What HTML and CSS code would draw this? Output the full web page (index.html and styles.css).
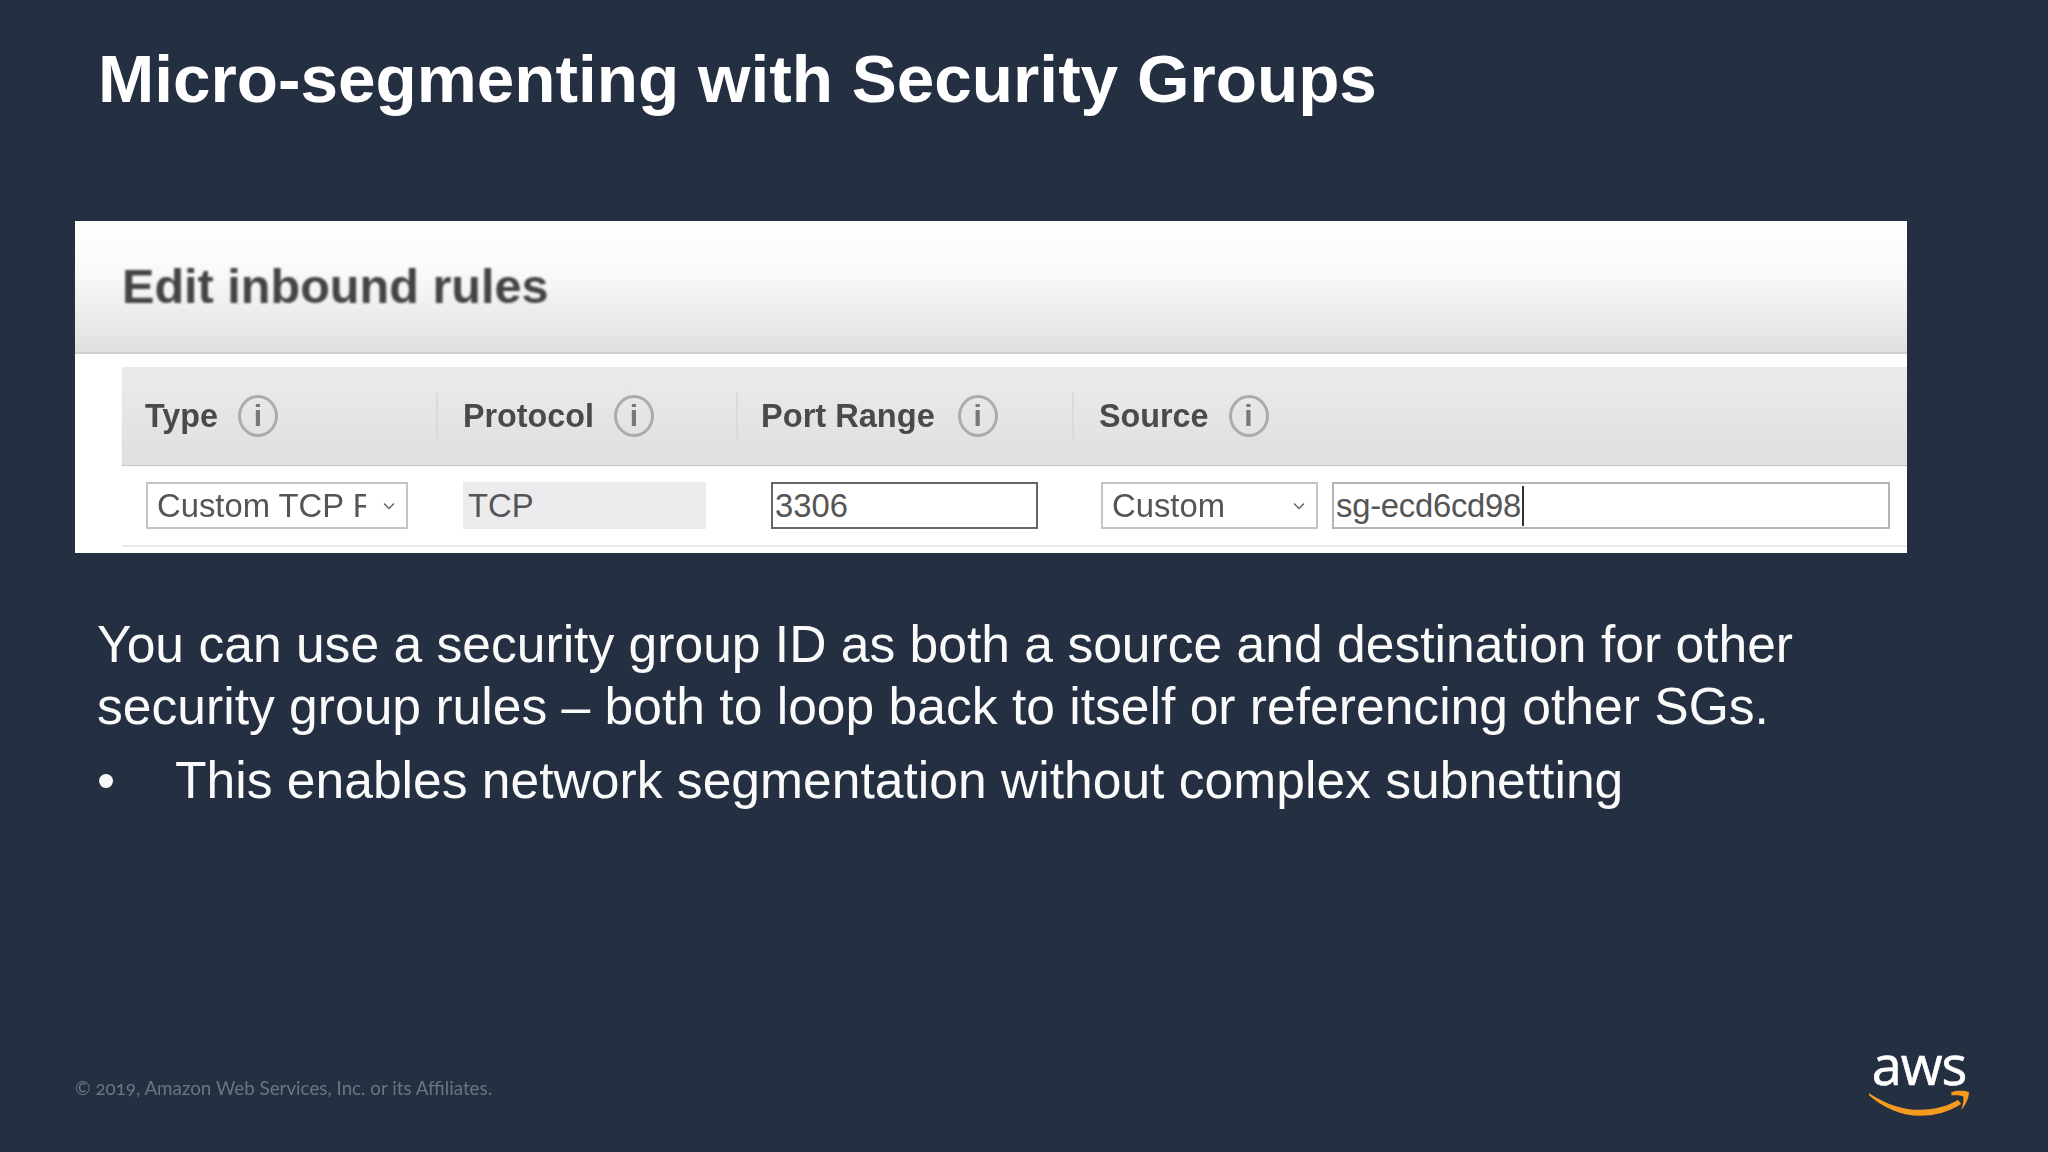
FILE: index.html
```html
<!DOCTYPE html>
<html lang="en">
<head>
<meta charset="utf-8">
<title>Micro-segmenting with Security Groups</title>
<link rel="stylesheet" href="styles.css">
</head>
<body>
<main class="slide">
  <h1 class="title">Micro-segmenting with Security Groups</h1>
  <section class="panel">
    <header class="panel-head"><h2 class="panel-title">Edit inbound rules</h2></header>
    <div class="table">
      <div class="band">
        <div class="th th-type">Type <span class="info">i</span></div>
        <div class="th th-proto">Protocol <span class="info">i</span></div>
        <div class="th th-port">Port Range <span class="info">i</span></div>
        <div class="th th-source">Source <span class="info">i</span></div>
      </div>
      <div class="row">
        <div class="ctl select sel-type"><span class="clip">Custom TCP Rule</span><svg class="chev" viewBox="0 0 12 8"><path d="M1 1.5 6 6.5 11 1.5"/></svg></div>
        <div class="ctl static">TCP</div>
        <div class="ctl input port">3306</div>
        <div class="ctl select sel-source"><span class="clip">Custom</span><svg class="chev" viewBox="0 0 12 8"><path d="M1 1.5 6 6.5 11 1.5"/></svg></div>
        <div class="ctl input sg"><span class="sg-text">sg-ecd6cd98</span><span class="caret"></span></div>
      </div>
    </div>
  </section>
  <div class="body">
    <p class="lead">You can use a security group ID as both a source and destination for other security group rules – both to loop back to itself or referencing other SGs.</p>
    <ul class="bullets"><li class="bullet"><span class="dot">•</span><span>This enables network segmentation without complex subnetting</span></li></ul>
  </div>
  <footer class="foot">
    <span class="copy">© 2019, Amazon Web Services, Inc. or its Affiliates.</span>
    <div class="logo">
      <span class="logo-word">aws</span>
      <svg class="smile" viewBox="0 0 102 26"><path class="smile-arc" d="M0 3C18 15 36 20 52 20 68 20 80 16 91 10 L94 14C80 23 66 26 52 26 34 26 14 18 0 5Z"/><path class="smile-arc" d="M84 2C90 0 97 0 102 2 102 8 98 16 94 20 96 14 97 9 96 6 93 5 89 5 84 5Z"/></svg>
    </div>
  </footer>
</main>
</body>
</html>
```
FILE: styles.css
```css
* { box-sizing: border-box; }
html, body { margin: 0; padding: 0; }
body { width: 2048px; height: 1152px; overflow: hidden; background: #242f41; font-family: "Liberation Sans", Arial, sans-serif; }
.slide { width: 2048px; height: 1152px; display: flex; flex-direction: column; }
.title { margin: 40px 0 0 98px; height: 77px; font-size: 67.5px; line-height: 77px; font-weight: 700; color: #fff; filter: blur(.4px); }
.panel { margin: 104px 0 0 75px; width: 1832px; height: 332px; background: #fff; display: flex; flex-direction: column; overflow: hidden; }
.panel-head { height: 133px; padding: 38px 0 0 47px; background: linear-gradient(#fff 0%, #f9f9f9 40%, #e0e0e0 100%); border-bottom: 2px solid #d0d0d0; }
.panel-title { margin: 0; font-size: 48.6px; line-height: 55px; font-weight: 700; color: #444; filter: blur(.8px); }
.table { margin: 13px 0 0 47px; filter: blur(.7px); }
.band { height: 98px; display: grid; grid-template-columns: 314px 300px 336px 1fr; background: linear-gradient(#ebebed, #dfdfe1); box-shadow: 0 1px 1px #c8c8c8; align-items: center; }
.th { height: 46px; display: flex; align-items: center; gap: 20px; font-size: 32.3px; font-weight: 700; color: #4a4a4a; }
.th-type { padding-left: 23px; }
.th-proto, .th-port, .th-source { border-left: 2px solid #dadadc; }
.th-proto { padding-left: 25px; }
.th-port { padding-left: 23px; gap: 23px; font-size: 32.6px; }
.th-source { padding-left: 25px; }
.info { width: 40px; height: 42px; border: 3px solid #ababab; border-radius: 50%; display: flex; align-items: center; justify-content: center; font-size: 30px; font-weight: 700; color: #777; }
.row { height: 82px; padding: 17px 0 0 24px; display: flex; border-bottom: 2px solid #e8e8e8; margin-bottom: 0; }
.ctl { height: 47px; display: flex; align-items: center; font-size: 32.8px; color: #555; background: #fff; }
.select { border: 2px solid #c4c4c4; padding-left: 9px; justify-content: space-between; padding-right: 11px; }
.clip { overflow: hidden; white-space: nowrap; }
.sel-type { width: 262px; }
.sel-type .clip { width: 209px; }
.static { width: 243px; margin-left: 55px; padding-left: 5px; background: #ececee; }
.input { border: 2px solid #b5b5b5; padding-left: 2px; }
.port { width: 267px; margin-left: 65px; border-color: #666; }
.sel-source { width: 217px; margin-left: 63px; }
.sg { width: 558px; margin-left: 14px; }
.sg-text { letter-spacing: -.25px; }
.chev { width: 12px; height: 8px; flex: none; }
.chev path { fill: none; stroke: #666; stroke-width: 1.5; }
.caret { width: 2px; height: 40px; background: #333; margin-left: 1px; }
.body { margin: 61px 0 0 97px; width: 1810px; color: #fafafa; font-size: 51.6px; line-height: 61.5px; filter: blur(.4px); }
.lead { margin: 0; }
.bullets { margin: 13px 0 0; padding: 0; list-style: none; }
.bullet { display: flex; }
.dot { width: 78px; }
.foot { margin-top: auto; padding: 0 79px 36px 75px; display: flex; justify-content: space-between; align-items: center; }
.copy { margin-top: 20px; font-family: Lato, "Open Sans", sans-serif; font-variant-numeric: oldstyle-nums; font-size: 18.8px; color: #6c7482; filter: blur(.4px); }
.logo { width: 100px; display: flex; flex-direction: column; align-items: center; filter: blur(.4px); }
.logo-word { font-family: "Open Sans", sans-serif; font-size: 54px; line-height: 50px; color: #fff; letter-spacing: -1px; -webkit-text-stroke: .6px #fff; }
.smile { width: 100px; height: 26px; margin-top: 1px; }
.smile-arc { fill: #f49a1f; }
```
